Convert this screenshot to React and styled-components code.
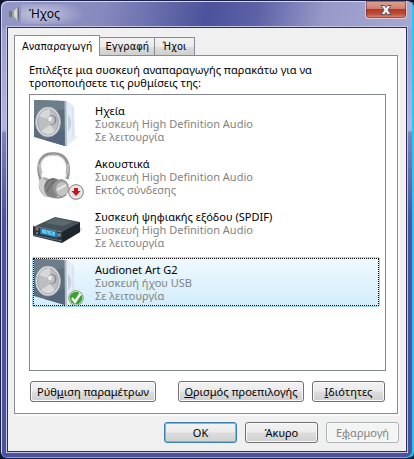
import React, { useState } from 'react'
import styled, { createGlobalStyle, css } from 'styled-components';

const tabs = ['Αναπαραγωγή', 'Εγγραφή', 'Ήχοι']

const devices = [
  { id: 1, icon: 'speaker', name: 'Ηχεία', driver: 'Συσκευή High Definition Audio', status: 'Σε λειτουργία' },
  { id: 2, icon: 'headphones', name: 'Ακουστικά', driver: 'Συσκευή High Definition Audio', status: 'Εκτός σύνδεσης', badge: 'unplugged' },
  { id: 3, icon: 'digital', name: 'Συσκευή ψηφιακής εξόδου (SPDIF)', driver: 'Συσκευή High Definition Audio', status: 'Σε λειτουργία' },
  { id: 4, icon: 'speaker', name: 'Audionet Art G2', driver: 'Συσκευή ήχου USB', status: 'Σε λειτουργία', badge: 'default' },
]

const SpeakerIcon = () => (
  <svg width="48" height="48" viewBox="0 0 48 48">
    <path d="M34 47 L41 38 L46 37 Z" fill="#e9edf0" />
    <path d="M32 2 L34 2 L41 7 L42 37 L34 48 L32 47 Z" fill="#e4ecf6" />
    <path d="M35 16 Q39 20 38 27 L35 33 Z" fill="#c5d0e2" />
    <path d="M40 8 V38" stroke="#cbdcec" strokeWidth=".8" fill="none" />
    <path d="M1 1 L32 2 L32 47 L1 38 Z" fill="#5d6e7c" />
    <path d="M1 1 L32 2 V10 L1 16 Z" fill="#6d7d89" />
    <path d="M32 30 V47 L12 41 Z" fill="#54667b" />
    <path d="M32.500 2 L33 47" fill="none" stroke="#b5bfca" strokeWidth="2" />
    <ellipse cx="15" cy="23" rx="12.500" ry="15" fill="#e2e3e4" stroke="#a1aab2" strokeWidth=".8" />
    <ellipse cx="15" cy="23" rx="10.500" ry="13" fill="#bcbec1" stroke="#979ca1" strokeWidth=".8" />
    <path d="M17 21 L6 17 Q10 10 17 10 Z" fill="#dedfe0" opacity=".8" />
    <path d="M8 32 L17 26 L22 32 Q15 39 8 32Z" fill="#e0e0e0" opacity=".8" />
    <ellipse cx="19" cy="21" rx="4.500" ry="5" fill="#85898d" />
    <ellipse cx="18" cy="21" rx="3.800" ry="4.300" fill="#bfc1c2" />
    <ellipse cx="17" cy="20" rx="1.800" ry="2.200" fill="#eeeeee" />
  </svg>
)

const HeadphonesIcon = () => (
  <svg width="48" height="48" viewBox="0 0 48 48">
    <path d="M8 28 C2 10 10 1 20 2 C31 1 38 10 34 27" fill="none" stroke="#949494" strokeWidth="3.500" />
    <path d="M9 26 C3 11 11 3 20 3 C30 3 36 10 33 26" fill="none" stroke="#dcdcdc" strokeWidth="1.200" />
    <path d="M6 12 L8 22 M35 12 L34 22" stroke="#bababa" strokeWidth="3" />
    <ellipse cx="13" cy="35" rx="7" ry="10" fill="#a8a8a8" transform="rotate(-18 13 35)" />
    <ellipse cx="11" cy="35" rx="4.500" ry="9" fill="#cecece" transform="rotate(-18 11 35)" />
    <ellipse cx="20" cy="36" rx="9" ry="10" fill="#828282" />
    <path d="M12 35 Q14 27 22 27 M14 40 Q17 30 25 28" fill="none" stroke="#6e6e6e" strokeWidth="1.500" />
    <ellipse cx="28" cy="36" rx="8" ry="9" fill="#989898" />
    <ellipse cx="29" cy="37" rx="6" ry="7" fill="#c4c4c4" />
    <path d="M24 38 L33 33" stroke="#ececec" strokeWidth="2" />
    <path d="M18 44 Q26 48 33 43" fill="none" stroke="#8b8b8b" strokeWidth="1.500" />
  </svg>
)

const DigitalIcon = () => (
  <svg width="50" height="48" viewBox="0 0 50 48">
    <path d="M28 38 L47 28 L49 23 L44 23 Z" fill="#d5dade" />
    <path d="M0 22 L22 12 L47 17 L29 28 Z" fill="#46525a" />
    <path d="M12 18 L22 13 L40 17 L30 21 Z" fill="#5b6870" />
    <path d="M0 21 L29 27 V38 L0 31 Z" fill="#2a353f" />
    <path d="M29 27 L47 17 V27 L29 38 Z" fill="#1d262d" />
    <path d="M0 21 L29 27" fill="none" stroke="#75828c" />
    <path d="M7 23 L24 26.500 V33 L7 29 Z" fill="#2379a9" />
    <path d="M9 24 L22 27 V31 L9 28 Z" fill="#6bc9ed" />
    <path d="M13 26 l2 3 M17 27 l3 2" stroke="#3187b4" />
    <circle cx="4" cy="24" r="1.800" fill="#b75a54" />
    <circle cx="4" cy="28" r="1" fill="#8796a0" />
    <circle cx="26" cy="30" r="2" fill="#75838d" />
    <path d="M0 30 L29 36" stroke="#65727c" />
  </svg>
)

const UnpluggedBadge = () => (
  <svg width="16" height="16" viewBox="0 0 16 16">
    <circle cx="8" cy="8" r="7.300" fill="#eeeeee" stroke="#777777" />
    <circle cx="8" cy="8" r="5.500" fill="#e3e3e3" />
    <path d="M6 4 H10 V7 H12.500 L8 12 L3.500 7 H6 Z" fill="#c4161c" />
  </svg>
)

const DefaultBadge = () => (
  <svg width="16" height="16" viewBox="0 0 16 16">
    <circle cx="8" cy="8" r="7.300" fill="#f4f4f4" stroke="#8c9a8c" />
    <circle cx="8" cy="8" r="6.300" fill="#35a52c" />
    <path d="M4 8 L7 12 L12.500 3.500" fill="none" stroke="#ffffff" strokeWidth="2.400" />
  </svg>
)

const TitleSpeaker = () => (
  <svg width="12" height="16" viewBox="0 0 12 16">
    <path d="M0 5 H4 V11 H0 Z" fill="#70767a" />
    <path d="M3 5 L9 0 V16 L3 11 Z" fill="#9ba0a3" />
    <path d="M5 5 L8 2 V14 L5 10 Z" fill="#d5d8d9" />
    <path d="M9 0 Q11 8 9 16 Z" fill="#596066" />
  </svg>
)

const CloseIcon = () => (
  <svg width="12" height="10" viewBox="0 0 12 10">
    <path d="M1 .5 H4.500 L6 2.500 L7.500 .5 H11 L8 5 L11 9.500 H7.500 L6 7.500 L4.500 9.500 H1 L4 5 Z" fill="#f5f5f5" stroke="#535666" />
  </svg>
)

const icons = { speaker: SpeakerIcon, headphones: HeadphonesIcon, digital: DigitalIcon }
const badges = { unplugged: UnpluggedBadge, default: DefaultBadge }

const Device = ({ device, selected, onSelect }) => {
  const Icon = icons[device.icon]
  const Mark = badges[device.badge]
  return (
    <Item role="option" aria-selected={selected} tabIndex={selected ? 0 : -1} $selected={selected} onClick={onSelect}>
      <Picture>
        <Icon />
        {Mark && <Badge><Mark /></Badge>}
      </Picture>
      <Details>
        <Name>{device.name}</Name>
        <Text>{device.driver}</Text>
        <Text>{device.status}</Text>
      </Details>
    </Item>
  )
}

const App = () => {
  const [tab, setTab] = useState(0)
  const [selected, setSelected] = useState(4)
  return (
    <Frame>
      <GlobalStyle />
      <TitleBar>
        <TitleSpeaker />
        <Title>Ήχος</Title>
        <CloseButton aria-label="Κλείσιμο"><CloseIcon /></CloseButton>
      </TitleBar>
      <Body>
        <TabList role="tablist">
          {tabs.map((label, i) => (
            <Tab key={label} role="tab" aria-selected={tab === i} $active={tab === i} onClick={() => setTab(i)}>{label}</Tab>
          ))}
        </TabList>
        <Panel role="tabpanel">
          <Hint id="hint">Επιλέξτε μια συσκευή αναπαραγωγής παρακάτω για να τροποποιήσετε τις ρυθμίσεις της:</Hint>
          <List role="listbox" aria-labelledby="hint">
            {devices.map(device => (
              <Device key={device.id} device={device} selected={selected === device.id} onSelect={() => setSelected(device.id)} />
            ))}
          </List>
          <Actions>
            <Button $wide>Ρύθ<u>μ</u>ιση παραμέτρων</Button>
            <ActionGroup>
              <Button $wide><u>Ο</u>ρισμός προεπιλογής</Button>
              <Button><u>Ι</u>διότητες</Button>
            </ActionGroup>
          </Actions>
        </Panel>
        <Footer>
          <Button $primary>OK</Button>
          <Button>Άκυρο</Button>
          <Button disabled>Ε<u>φ</u>αρμογή</Button>
        </Footer>
      </Body>
    </Frame>
  )
}

const GlobalStyle = createGlobalStyle`
  * {
    box-sizing: border-box;
  }
  body {
    margin: 0;
    background: #10142c;
    font-family: "Noto Sans", "Open Sans", sans-serif;
    font-size: 11px;
    line-height: 13px;
    color: #000;
  }
  button {
    font: inherit;
    color: inherit;
    padding: 0;
    white-space: nowrap;
  }
`

const Frame = styled.div`
  display: flex;
  flex-direction: column;
  min-height: 100vh;
  padding: 0 6px 6px;
  border: 1px solid #1c2248;
  border-right-color: #27c8f5;
  border-radius: 7px;
  background:
    linear-gradient(100deg, #9497c6 0%, #8689bd 25%, #4c529b 50%, #5d62a7 62%, #9899c8 78%, #a6a8d2 100%) top / 100% 27px no-repeat,
    linear-gradient(#9699c8 0, #b4b5dc 129px, #7f84bb 132px, #4c529b 220px, #4c529b 100%);
  box-shadow: inset -1px -1px 0 #27c8f5, inset 1px 1px 0 #d4d5ec;
`

const TitleBar = styled.header`
  display: flex;
  align-items: center;
  height: 26px;
  padding-left: 2px;
`

const Title = styled.h1`
  flex: 1;
  margin: 0;
  padding: 0 8px;
  font-size: 12px;
  font-weight: 400;
  line-height: 20px;
  background: radial-gradient(ellipse 44px 14px at 20px 50%, rgba(255, 255, 255, 0.5), transparent);
`

const CloseButton = styled.button`
  display: flex;
  align-items: center;
  justify-content: center;
  align-self: flex-start;
  width: 42px;
  height: 18px;
  border: 1px solid #dcc6d4;
  border-top: 0;
  border-radius: 0 0 4px 4px;
  background: linear-gradient(#dda493 0%, #cf8071 45%, #b03a28 50%, #bf4a38 75%, #dd9077 100%);
  box-shadow: inset 0 0 0 1px rgba(90, 30, 50, 0.5);
`

const Body = styled.main`
  flex: 1;
  display: flex;
  flex-direction: column;
  padding: 7px 7px 8px 6px;
  border: 1px solid #2b2f5c;
  background: #f0f0f0;
  box-shadow: 0 0 0 1px #c3c5e4;
`

const TabList = styled.div`
  display: flex;
  align-items: flex-end;
`

const Tab = styled.button`
  height: 18px;
  min-width: 40px;
  padding: 0 5px;
  border: 1px solid #898c95;
  border-bottom: 0;
  border-left: 0;
  background: linear-gradient(#f2f2f2 0%, #ebebeb 50%, #dddddd 51%, #cfcfcf 100%);
  font-family: "DejaVu Sans Condensed", "DejaVu Sans", sans-serif;
  ${({ $active }) => $active && css`
    height: 21px;
    margin-bottom: -1px;
    padding: 0 7px;
    border-left: 1px solid #898c95;
    background: #fff;
    position: relative;
  `}
`

const Panel = styled.section`
  flex: 1;
  display: flex;
  flex-direction: column;
  margin-right: 1px;
  padding: 7px 11px 11px 14px;
  border: 1px solid #898c95;
  background: #fff;
  box-shadow: 2px 2px 0 #fafafa;
`

const Hint = styled.p`
  max-width: 300px;
  margin: 0 0 5px;
`

const List = styled.ul`
  flex: 1;
  display: flex;
  flex-direction: column;
  gap: 3px;
  margin: 0 0 10px;
  padding: 3px 5px 3px 2px;
  border: 1px solid #828790;
  list-style: none;
`

const Item = styled.li`
  display: flex;
  height: 50px;
  padding: 0;
  border: 1px solid transparent;
  border-radius: 2px;
  cursor: default;
  ${({ $selected }) => $selected && css`
    border-color: #99d5f0;
    background: linear-gradient(#f0f9ff, #d2edfb);
    outline: 1px dotted #000;
    outline-offset: -2px;
  `}
`

const Picture = styled.div`
  position: relative;
  width: 62px;
`

const Badge = styled.span`
  position: absolute;
  left: 35px;
  bottom: 0;
  height: 16px;
`

const Details = styled.div`
  flex: 1;
  padding-top: 5px;
`

const Name = styled.div`
  color: #000;
`

const Text = styled.div`
  color: #838383;
`

const Actions = styled.div`
  display: flex;
  justify-content: space-between;
  padding: 0 1px;
`

const ActionGroup = styled.div`
  display: flex;
  gap: 8px;
`

const Button = styled.button`
  width: ${({ $wide }) => ($wide ? '126px' : '73px')};
  height: 21px;
  border: 1px solid #707070;
  border-radius: 3px;
  background: linear-gradient(#f3f3f3 0%, #ebebeb 48%, #dddddd 52%, #cfcfcf 100%);
  box-shadow: inset 0 0 0 1px #fafafa;
  ${({ $primary }) => $primary && css`
    border-color: #3c7fb1;
    box-shadow: inset 0 0 0 1px #3fd0fa;
  `}
  &:disabled {
    border-color: #adb2b5;
    background: #f4f4f4;
    color: #838383;
  }
`

const Footer = styled.footer`
  display: flex;
  justify-content: flex-end;
  gap: 8px;
  margin-top: 8px;
`

export default App
